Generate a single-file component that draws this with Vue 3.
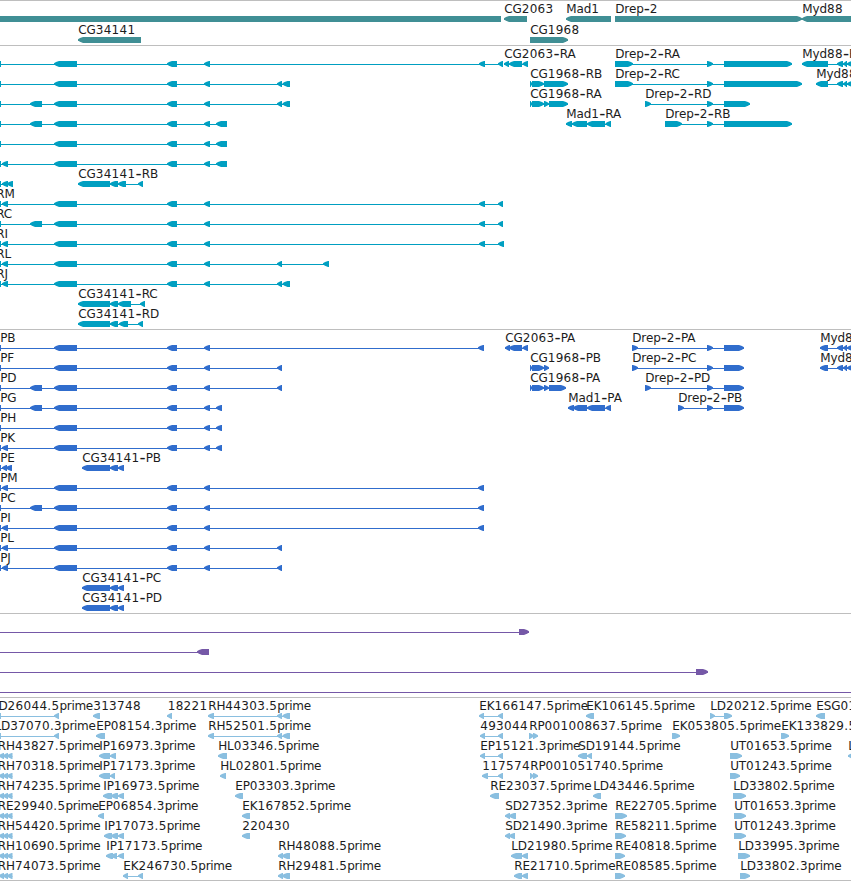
<script setup>
// Feature: strand direction, label, exon start/end pairs, label x and the extent of the line
const base = [[54, 77], [167, 177], [204, 210]]
const nub = [0, 1]
const small = [2, 8]
const mid = [30, 42]
const f = (dir, label, exons, opts = {}) => ({ dir, label, exons, x: opts.x ?? exons[0]?.[0] ?? 0, from: opts.from ?? exons[0]?.[0], to: opts.to ?? exons[exons.length - 1]?.[1] })
const long = (label, extra, tail, x) => f('L', label, [nub, ...extra, ...base, ...tail], { x })

const drep = (label, first, last) => f('R', label, [first, [707, 713], [724, last]])
const myd = (label, start) => f('L', label, [[start, 828], [837, 843], [843, 847], [847, 853]])
const edge = [[277, 282], [282.5, 290]]
const cgR = (label, a, b) => f('L', label, [[78, 110], [110, 118], a, b])
const cgP = (label) => f('L', label, [[82, 110], [110, 118], [118, 124]])

const genes = [
  [f('', '', [[-5, 501]]), f('L', 'CG2063', [[504, 527]]), f('L', 'Mad1', [[566, 611]]), f('R', 'Drep-2', [[615, 802]]), f('L', 'Myd88', [[802, 860]])],
  [f('L', 'CG34141', [[78, 141]]), f('R', 'CG1968', [[530, 568]])]
]

const far = [[479, 485], [498, 503]]
const transcripts = [
  [long('', [], far), f('L', 'CG2063-RA', [[504, 509], [509, 522], [522.5, 528]]), drep('Drep-2-RA', [615, 633], 792), myd('Myd88-RA', 802)],
  [long('', [], edge), f('R', 'CG1968-RB', [[530, 533], [532, 544], [544, 568]]), drep('Drep-2-RC', [615, 633], 802), myd('Myd88-RB', 816)],
  [long('', [mid], edge), f('R', 'CG1968-RA', [[530, 533], [532, 544], [544, 549], [549, 568]]), drep('Drep-2-RD', [645, 651], 750)],
  [long('', [mid], [[216, 227]]), f('L', 'Mad1-RA', [[566, 572], [572, 587], [587, 605], [605.5, 611]]), drep('Drep-2-RB', [665, 682], 792)],
  [long('', [], [[216, 227]])],
  [long('', [small], [[216, 227]])],
  [f('L', '', [nub, [2, 8], [7, 13]]), cgR('CG34141-RB', [118, 126], [138, 143])],
  [long('RM', [small], far, -4)],
  [long('RC', [mid], far, -4)],
  [long('RI', [small], [[479, 485], [498, 504]], -4)],
  [long('RL', [small], [[277, 282], [323, 329]], -4)],
  [long('RJ', [small], edge, -4)],
  [cgR('CG34141-RC', [118, 131], [140, 145])],
  [cgR('CG34141-RD', [119, 128], [138, 143])]
]

const p484 = [[478, 484]]
const p282 = [[277, 282]]
const p222 = [[216, 222]]
const proteins = [
  [long('PB', [], p484, 0), f('L', 'CG2063-PA', [[505, 510], [509, 522], [522.5, 528]]), drep('Drep-2-PA', [632, 638], 744), myd('Myd88-PA', 820)],
  [long('PF', [], p282, 0), f('R', 'CG1968-PB', [[530, 533], [532, 544], [544, 549]]), drep('Drep-2-PC', [632, 638], 744), myd('Myd88-PB', 820)],
  [long('PD', [mid], p282, 0), f('R', 'CG1968-PA', [[530, 533], [532, 544], [544, 549], [549, 566]]), drep('Drep-2-PD', [645, 651], 744)],
  [long('PG', [mid], p222, 0), f('L', 'Mad1-PA', [[568, 574], [573, 587], [587, 605], [605.5, 611]]), drep('Drep-2-PB', [678, 684], 744)],
  [long('PH', [], p222, 0)],
  [long('PK', [small], p222, 0)],
  [f('L', 'PE', [nub, [2, 7], [6, 12]], { x: 0 }), cgP('CG34141-PB')],
  [long('PM', [small], p484, 0)],
  [long('PC', [mid], p484, 0)],
  [long('PI', [small], p484, 0)],
  [long('PL', [small], p282, 0)],
  [long('PJ', [small], p282, 0)],
  [cgP('CG34141-PC')],
  [cgP('CG34141-PD')]
]

const inserts = [
  [f('R', '', [[519, 529]], { from: 0 })],
  [f('L', '', [[197, 209]], { from: 0 })],
  [f('R', '', [[696, 708]], { from: 0 })],
  [f('', '', [], { from: 0, to: 851 })]
]

const L = (label, ...exons) => f('L', label, exons)
const R = (label, ...exons) => f('R', label, exons)
const left = (label) => f('L', label, [[-1, 4], [3, 8], [7, 12.5]], { x: -2.4 })
const ests = [
  [f('L', 'LD26044.5prime', [[0, 1], [54, 59]], { x: -8.4 }), L('313748', [93, 100]), f('L', '18221', [[167, 172]], { x: 167.5 }), L('RH44303.5prime', [208, 214], ...edge), L('EK166147.5prime', [479, 484], [498, 503]), L('EK106145.5prime', [586, 594]), R('LD20212.5prime', [710, 715], [724, 732]), L('ESG01', [816, 825])],
  [f('L', 'LD37070.3prime', [[0, 1], [54, 59]], { x: -5.8 }), L('EP08154.3prime', [96, 105]), L('RH52501.5prime', [208, 214], ...edge), L('493044', [480, 485], [498, 503]), R('RP001008637.5prime', [529, 534], [533, 538]), R('EK053805.5prime', [672, 680]), R('EK133829.5prime', [781, 789])],
  [left('RH43827.5prime'), L('IP16973.3prime', [99, 110], [110, 116]), L('HL03346.5prime', [218, 227]), L('EP15121.3prime', [480, 485], [498, 503]), L('SD19144.5prime', [578, 587], [587, 592]), R('UT01653.5prime', [730, 742]), L('LD', [848, 860])],
  [left('RH70318.5prime'), L('IP17173.3prime', [99, 110], [110, 115]), L('HL02801.5prime', [220, 226]), L('117574', [482, 488], [498, 503]), R('RP001051740.5prime', [530, 534], [533, 538]), R('UT01243.5prime', [730, 740])],
  [left('RH74235.5prime'), L('IP16973.5prime', [103, 112], [111, 118], [118, 124]), L('EP03303.3prime', [235, 243]), L('RE23037.5prime', [490, 499]), L('LD43446.5prime', [593, 601]), R('LD33802.5prime', [733, 746])],
  [left('RE29940.5prime'), L('EP06854.3prime', [98, 104]), L('EK167852.5prime', [242, 250]), L('SD27352.3prime', [505, 510], [509, 516]), R('RE22705.5prime', [615, 627]), R('UT01653.3prime', [734, 746])],
  [left('RH54420.5prime'), L('IP17073.5prime', [104, 112], [111, 118], [118, 124]), L('220430', [242, 250]), L('SD21490.3prime', [505, 510], [509, 515]), R('RE58211.5prime', [615, 626]), R('UT01243.3prime', [734, 746])],
  [left('RH10690.5prime'), L('IP17173.5prime', [106, 113], [111, 117], [118, 124]), L('RH48088.5prime', [278, 283], [282, 290]), L('LD21980.5prime', [511, 522], [522, 528]), R('RE40818.5prime', [615, 625]), R('LD33995.3prime', [738, 750])],
  [left('RH74073.5prime'), L('EK246730.5prime', [123, 128], [138, 143]), L('RH29481.5prime', [278, 283], [282, 290]), L('RE21710.5prime', [514, 522], [522, 528]), R('RE08585.5prime', [615, 625]), R('LD33802.3prime', [740, 750])]
]

const tracks = [
  { name: 'genes', height: 44, pitch: 21, rows: genes },
  { name: 'transcripts', height: 283, pitch: 20, rows: transcripts },
  { name: 'proteins', height: 283, pitch: 20, rows: proteins },
  { name: 'inserts', height: 83, pitch: 20, rows: inserts },
  { name: 'ests', height: 182, pitch: 20, rows: ests }
]

// Outline of one exon, six pixels tall, pointed on the strand's side
function shape(dir, [a, b]) {
  const w = b - a
  if (!dir || w < 2) return `M${a} 0H${b}V6H${a}Z`
  const t = Math.min(5, w - 0.8)
  return dir === 'L'
    ? `M${a} 2.2L${a + 2} 1L${a + t} 0H${b}V6H${a + t}L${a + 2} 4.8L${a} 3.6Z`
    : `M${b} 2.2L${b - 2} 1L${b - t} 0H${a}V6H${b - t}L${b - 2} 4.8L${b} 3.6Z`
}

// Splits a label into runs that are spaced differently: numbers, hyphens, letters
function pieces(label) {
  let drop = 0
  return label.split(/(-|[\d.]+)/).filter(Boolean).map((text) => {
    const dash = text === '-'
    const dy = (dash ? 1 : 0) - drop
    drop = dash ? 1 : 0
    return { text, dy, kind: dash ? 'dash' : /\d/.test(text) ? 'digits' : /^[a-z]/.test(text) ? 'lower' : 'upper' }
  })
}
</script>

<template>
  <main class="browser">
    <section v-for="track in tracks" :key="track.name" class="track" :class="track.name">
      <svg class="lane" width="851" :height="track.height">
        <g v-for="(row, r) in track.rows" :key="r" :transform="`translate(0 ${15 + r * track.pitch})`">
          <g v-for="(item, i) in row" :key="i">
            <rect :x="item.from" y="3" :width="item.to - item.from" height="1" />
            <path v-for="(exon, e) in item.exons" :key="e" :d="shape(item.dir, exon)" />
          </g>
          <template v-for="(item, i) in row" :key="'t' + i">
            <text v-if="item.label" :x="item.x + 0.2" y="-3"><tspan v-for="(p, k) in pieces(item.label)" :key="k" :dy="p.dy" :class="p.kind">{{ p.text }}</tspan></text>
          </template>
        </g>
      </svg>
    </section>
  </main>
</template>

<style>
body {
  background: #fff;
}
</style>

<style scoped>
.browser {
  width: 851px;
  height: 881px;
  box-sizing: border-box;
  overflow: hidden;
  border-bottom: 1px solid #bebebe;
  background: #fff;
}
.track {
  border-top: 1px solid #bebebe;
}
.lane {
  display: block;
  overflow: hidden;
}
.genes {
  fill: #408f95;
}
.transcripts {
  fill: #009fc1;
}
.proteins {
  fill: #306dcd;
}
.inserts {
  fill: #7558a7;
}
.ests {
  fill: #8abfe0;
}
text {
  font: 12px "DejaVu Sans", sans-serif;
  fill: #1c1c1c;
}
.digits {
  letter-spacing: 0.33px;
}
.lower {
  letter-spacing: -0.3px;
}
.upper {
  letter-spacing: -0.1px;
}
.dash {
  font-size: 17px;
}
</style>
